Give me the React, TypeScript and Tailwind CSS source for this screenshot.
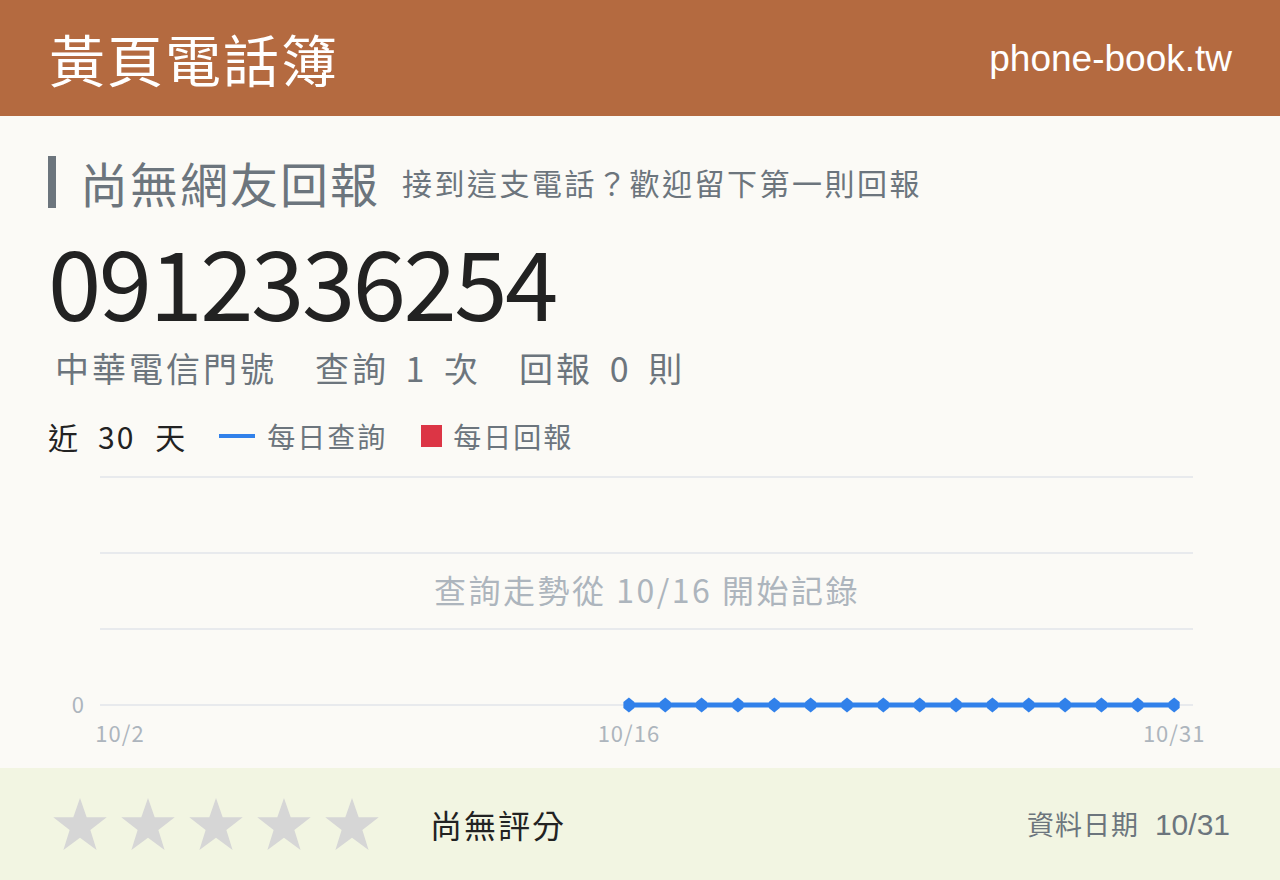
import React from "react";

const cjk = { fontFamily: '"Noto Sans CJK TC", "Noto Sans", sans-serif' };
const latin = { fontFamily: '"Liberation Sans", Arial, "Noto Sans CJK TC", sans-serif' };

// daily query points, 10/2 .. 10/31; only the last 16 days are recorded
const days = Array.from({ length: 30 }, (_, i) => ({ label: `10/${i + 2}`, value: i >= 14 ? 0 : null }));

function Star() {
  return (
    <svg width="56" height="53" viewBox="0 0 24 23" className="shrink-0">
      <polygon points="12,0 14.9,8.4 23.6,8.4 16.5,13.9 19.2,22.6 12,17.3 4.8,22.6 7.5,13.9 0.4,8.4 9.1,8.4" fill="#d6d6d6" />
    </svg>
  );
}

function Marker({ x, y }: { x: number; y: number }) {
  const pts = [
    [0, -7.5],
    [5.5, -3],
    [5.5, 3],
    [0, 7.5],
    [-5.5, 3],
    [-5.5, -3],
  ];
  return <polygon points={pts.map(([dx, dy]) => `${x + dx},${y + dy}`).join(" ")} fill="#3181ea" />;
}

function TrendChart() {
  const left = 52;
  const right = 1145;
  const x0 = 72;
  const step = 36.35;
  const rows = [10, 86, 162, 238];
  const pts = days.map((d, i) => ({ ...d, x: x0 + i * step })).filter((d) => d.value !== null);

  return (
    <svg width="1184" height="300" viewBox="0 0 1184 300" style={cjk}>
      {rows.map((y) => (
        <line key={y} x1={left} x2={right} y1={y} y2={y} stroke="#e8eaed" strokeWidth="2" />
      ))}
      <text x="599" y="136" textAnchor="middle" fontSize="32" fill="#adb5bd" letterSpacing="2.5">
        查詢走勢從 10/16 開始記錄
      </text>
      <text x="36" y="246" textAnchor="end" fontSize="22" fill="#adb5bd">0</text>
      <polyline points={pts.map((p) => `${p.x},238`).join(" ")} fill="none" stroke="#3181ea" strokeWidth="5" />
      {pts.map((p) => (
        <Marker key={p.label} x={p.x} y={238} />
      ))}
      <g fontSize="22" fill="#adb5bd" letterSpacing="1" textAnchor="middle">
        <text x={x0} y="275">10/2</text>
        <text x={x0 + 14 * step} y="275">10/16</text>
        <text x={x0 + 29 * step} y="275">10/31</text>
      </g>
    </svg>
  );
}

export default function App() {
  return (
    <div className="flex h-[880px] w-[1280px] flex-col overflow-hidden bg-[#fbfaf6]" style={cjk}>
      <header className="flex h-[116px] shrink-0 items-center justify-between bg-[#b46a40] px-[48px] text-white">
        <h1 className="pl-[1px] text-[56px] leading-none font-normal tracking-[2px]">黃頁電話簿</h1>
        <span className="text-[37px] leading-none" style={latin}>phone-book.tw</span>
      </header>

      <main className="flex flex-1 flex-col px-[48px] pt-[40px]">
        <div className="flex items-center">
          <div className="h-[52px] w-[8px] bg-[#6c757d]" />
          <h2 className="ml-[24px] text-[48px] leading-none tracking-[2px] text-[#6c757d]">尚無網友回報</h2>
          <p className="ml-[22px] text-[30px] leading-none tracking-[2.5px] text-[#6c757d]">接到這支電話？歡迎留下第一則回報</p>
        </div>

        <div className="mt-[24px] text-[96px] leading-none tracking-[-2.5px] text-[#222]">0912336254</div>

        <div className="mt-[23px] flex gap-[38px] pl-[7px] text-[34px] leading-none tracking-[3px] text-[#6c757d] [word-spacing:6px]">
          <span>中華電信門號</span>
          <span>查詢 1 次</span>
          <span>回報 0 則</span>
        </div>

        <div className="mt-[36px] flex items-center leading-none">
          <span className="flex gap-[20px] text-[30px] text-[#222]">
            <span>近</span>
            <span className="tracking-[2px]">30</span>
            <span>天</span>
          </span>
          <span className="ml-[34px] h-[4px] w-[36px] bg-[#3181ea]" />
          <span className="ml-[12px] text-[28px] tracking-[2px] text-[#6c757d]">每日查詢</span>
          <span className="ml-[34px] h-[22px] w-[21px] bg-[#dc3545]" />
          <span className="ml-[11px] text-[28px] tracking-[2px] text-[#6c757d]">每日回報</span>
        </div>

        <div className="mt-[16px]">
          <TrendChart />
        </div>
      </main>

      <footer className="flex h-[112px] shrink-0 items-center bg-[#f2f5e2] pr-[50px] pl-[52px]">
        <div className="flex gap-[12px]">
          {[0, 1, 2, 3, 4].map((i) => (
            <Star key={i} />
          ))}
        </div>
        <span className="ml-[50px] text-[32px] tracking-[2px] text-[#222]">尚無評分</span>
        <span className="ml-auto flex items-baseline gap-[16px] text-[#6c757d]">
          <span className="text-[27px] tracking-[1px]">資料日期</span>
          <span className="text-[30px]" style={latin}>10/31</span>
        </span>
      </footer>
    </div>
  );
}
